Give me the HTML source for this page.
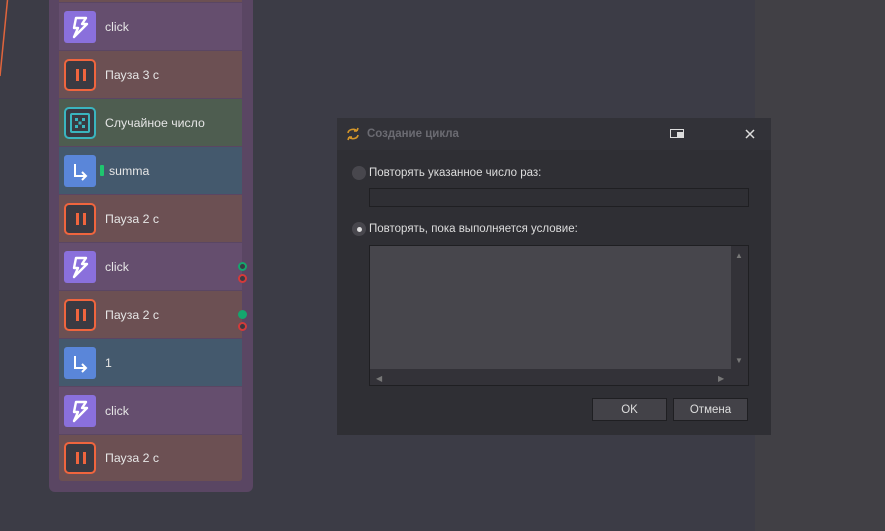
<!DOCTYPE html>
<html><head><meta charset="utf-8"><style>
*{box-sizing:border-box;margin:0;padding:0}
body{width:885px;height:531px;background:#3c3c46;position:relative;overflow:hidden;font-family:"Liberation Sans","DejaVu Sans",sans-serif;font-size:12.3px;color:#e6e6e6}
.right{position:absolute;left:755px;top:0;width:130px;height:531px;background:#414045}
.cont{position:absolute;left:49px;top:-10px;width:204px;height:502px;background:#5a4663;border-radius:0 0 6px 6px}
.row{position:absolute;left:59px;width:183px;height:47px;display:flex;align-items:center}
.ic{width:32px;height:32px;border-radius:3px;margin-left:5px;margin-right:9px;position:relative;flex:none}
.ev{background:#654e6e}.pa{background:#6c5053}.rn{background:#4e5d50}.vr{background:#44596d}
.bolt{background:#8a70dc}
.pause{border:2px solid #f0653e;background:#3a3a42;border-radius:5px}
.pause:before,.pause:after{content:"";position:absolute;top:8px;width:3px;height:12px;background:#f0653e}
.pause:before{left:10px}.pause:after{left:17px}
.dice{border:2px solid #3ab5bf;background:#3a3a42;border-radius:5px}
.arr{background:#5a86d9}
.dot{position:absolute;width:9px;height:9px;border-radius:50%;left:238px;border:2px solid}
.dlg{font-size:11.5px;line-height:14px}
</style></head><body>
<svg style="position:absolute;left:0;top:0" width="10" height="80"><line x1="7.5" y1="0" x2="0" y2="76" stroke="#e0643c" stroke-width="1.5"/></svg>
<div class="right"></div>
<div class="cont"></div>
<div class="row pa" style="top:-45px"></div>

<div class="row ev" style="top:3px"><div class="ic bolt"><svg width="32" height="32"><path d="M12 7h10l-4 6h5l-13 13 4-9h-4z" fill="none" stroke="#fff" stroke-width="2.4" stroke-linejoin="round"/></svg></div>click</div>
<div class="row pa" style="top:51px"><div class="ic pause"></div>Пауза 3 с</div>
<div class="row rn" style="top:99px"><div class="ic dice"><svg width="28" height="28" style="position:absolute;left:0;top:0"><rect x="5" y="5" width="18" height="18" rx="1" fill="none" stroke="#3ab5bf" stroke-width="2"/><rect x="9" y="9" width="3" height="3" fill="#3ab5bf"/><rect x="16" y="9" width="3" height="3" fill="#3ab5bf"/><rect x="12.5" y="12.5" width="3" height="3" fill="#3ab5bf"/><rect x="9" y="16" width="3" height="3" fill="#3ab5bf"/><rect x="16" y="16" width="3" height="3" fill="#3ab5bf"/></svg></div>Случайное число</div>
<div class="row vr" style="top:147px"><div class="ic arr"><svg width="32" height="32"><path d="M11 9v12h10M18 17l4 4-4 4" fill="none" stroke="#fff" stroke-width="2"/></svg></div><span style="display:inline-block;width:4px;height:11px;background:#1fc56f;border-radius:1px;margin:0 5px 0 -5px"></span>summa</div>
<div class="row pa" style="top:195px"><div class="ic pause"></div>Пауза 2 с</div>
<div class="row ev" style="top:243px"><div class="ic bolt"><svg width="32" height="32"><path d="M12 7h10l-4 6h5l-13 13 4-9h-4z" fill="none" stroke="#fff" stroke-width="2.4" stroke-linejoin="round"/></svg></div>click</div>
<div class="row pa" style="top:291px"><div class="ic pause"></div>Пауза 2 с</div>
<div class="row vr" style="top:339px"><div class="ic arr"><svg width="32" height="32"><path d="M11 9v12h10M18 17l4 4-4 4" fill="none" stroke="#fff" stroke-width="2"/></svg></div>1</div>
<div class="row ev" style="top:387px"><div class="ic bolt"><svg width="32" height="32"><path d="M12 7h10l-4 6h5l-13 13 4-9h-4z" fill="none" stroke="#fff" stroke-width="2.4" stroke-linejoin="round"/></svg></div>click</div>
<div class="row pa" style="top:435px;height:46px;border-radius:0 0 3px 3px"><div class="ic pause"></div>Пауза 2 с</div>

<div class="dot" style="top:262px;border-color:#14a66e;background:#3a3a42"></div>
<div class="dot" style="top:274px;border-color:#d43a3a;background:#3a3a42"></div>
<div class="dot" style="top:310px;border-color:#14a66e;background:#14a66e"></div>
<div class="dot" style="top:322px;border-color:#d43a3a;background:#3a3a42"></div>

<div class="dlg" style="position:absolute;left:337px;top:118px;width:434px;height:317px;background:#2f2f34">
 <div style="height:32px;background:#323238;position:relative;color:#6b6b72;font-weight:bold">
  <svg style="position:absolute;left:8px;top:8px" width="16" height="16"><path d="M3 7a5 4 0 0 1 9-2M12 5l1-3M12 5l-3 0M13 9a5 4 0 0 1-9 2M4 11l-1 3M4 11l3 0" fill="none" stroke="#d4962a" stroke-width="1.6"/></svg>
  <span style="position:absolute;left:30px;top:9px">Создание цикла</span>
  <div style="position:absolute;left:333px;top:11px;width:14px;height:9px;border:1px solid #ddd"><div style="position:absolute;right:0;top:2px;width:6px;height:5px;background:#ddd"></div></div>
  <svg style="position:absolute;left:408px;top:11px" width="10" height="10"><path d="M1 1l8 8M9 1l-8 8" stroke="#ddd" stroke-width="1.5"/></svg>
 </div>
 <div style="position:absolute;left:15px;top:48px;width:14px;height:14px;border-radius:50%;background:#48474d"></div>
 <span style="position:absolute;left:32px;top:48px;color:#ddd">Повторять указанное число раз:</span>
 <div style="position:absolute;left:32px;top:70px;width:380px;height:19px;border:1px solid #1f1f22;background:#2f2f34"></div>
 <div style="position:absolute;left:15px;top:104px;width:14px;height:14px;border-radius:50%;background:#48474d"><div style="margin:4.5px;width:5px;height:5px;border-radius:50%;background:#ddd"></div></div>
 <span style="position:absolute;left:32px;top:104px;color:#ddd">Повторять, пока выполняется условие:</span>
 <div style="position:absolute;left:32px;top:127px;width:380px;height:141px;border:1px solid #1f1f22;background:#333238">
  <div style="position:absolute;left:0;top:0;width:361px;height:123px;background:#47464c"></div>
  <span style="position:absolute;left:365px;top:3px;font-size:8px;color:#777">▲</span>
  <span style="position:absolute;left:365px;top:108px;font-size:8px;color:#777">▼</span>
  <span style="position:absolute;left:6px;top:126px;font-size:8px;color:#777">◀</span>
  <span style="position:absolute;left:348px;top:126px;font-size:8px;color:#777">▶</span>
 </div>
 <div style="position:absolute;left:255px;top:280px;width:75px;height:23px;border:1px solid #1f1f22;background:#434248;text-align:center;line-height:22px;color:#ddd">OK</div>
 <div style="position:absolute;left:336px;top:280px;width:75px;height:23px;border:1px solid #1f1f22;background:#434248;text-align:center;line-height:22px;color:#ddd">Отмена</div>
</div>
</body></html>
